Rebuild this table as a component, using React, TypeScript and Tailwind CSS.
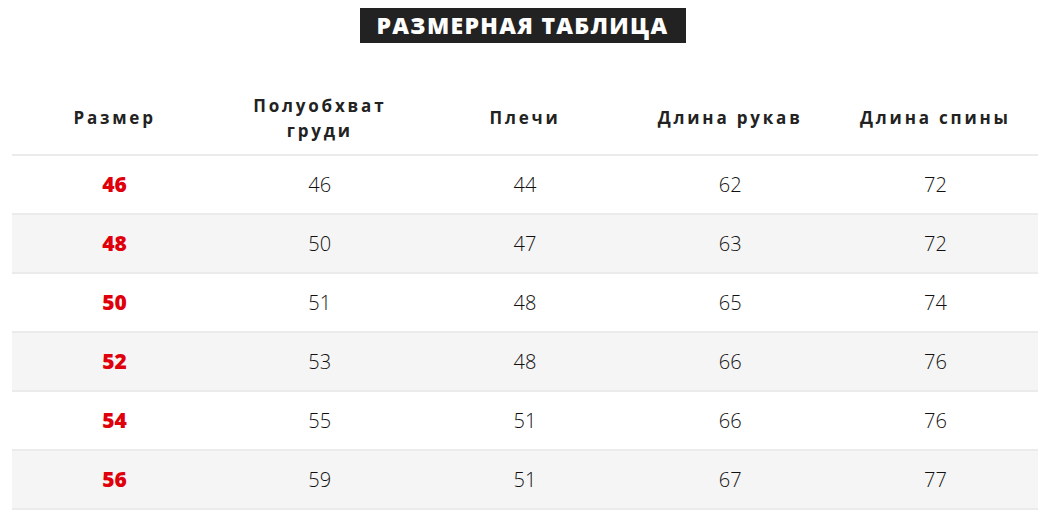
const headers = ["Размер", "Полуобхват груди", "Плечи", "Длина рукав", "Длина спины"];

const rows = [
  ["46", "46", "44", "62", "72"],
  ["48", "50", "47", "63", "72"],
  ["50", "51", "48", "65", "74"],
  ["52", "53", "48", "66", "76"],
  ["54", "55", "51", "66", "76"],
  ["56", "59", "51", "67", "77"],
];

export default function App() {
  return (
    <div className="min-h-screen bg-white font-['Open_Sans',sans-serif] text-[#222]">
      <div className="flex justify-center pt-2 pl-[5px]">
        <h2 className="bg-[#222] pl-[17px] pr-[18px] h-[35px] flex items-center text-[23px] font-extrabold tracking-[1.3px] text-white uppercase">
          Размерная таблица
        </h2>
      </div>

      <div className="ml-3 mr-[3px] mt-[36px]">
        <div className="grid grid-cols-5 border-b-2 border-[#ebebeb] h-[77px] items-center pt-[2px]">
          {headers.map((h) => (
            <div key={h} className="flex justify-center">
              <span className="block text-center text-[17px] leading-[25px] font-bold tracking-[2.8px] max-w-[160px]">{h}</span>
            </div>
          ))}
        </div>
        {rows.map((r, i) => (
          <div key={r[0]} className={`grid grid-cols-5 h-[59px] items-center border-b-2 border-[#ebebeb] ${i % 2 ? "bg-[#f5f5f5]" : "bg-white"}`}>
            {r.map((v, j) => (
              <div key={j} className={`text-center text-[20px] ${j === 0 ? "font-extrabold text-[21px] text-[#e0000b]" : "font-light text-[#111]"}`}>
                {v}
              </div>
            ))}
          </div>
        ))}
      </div>
    </div>
  );
}
